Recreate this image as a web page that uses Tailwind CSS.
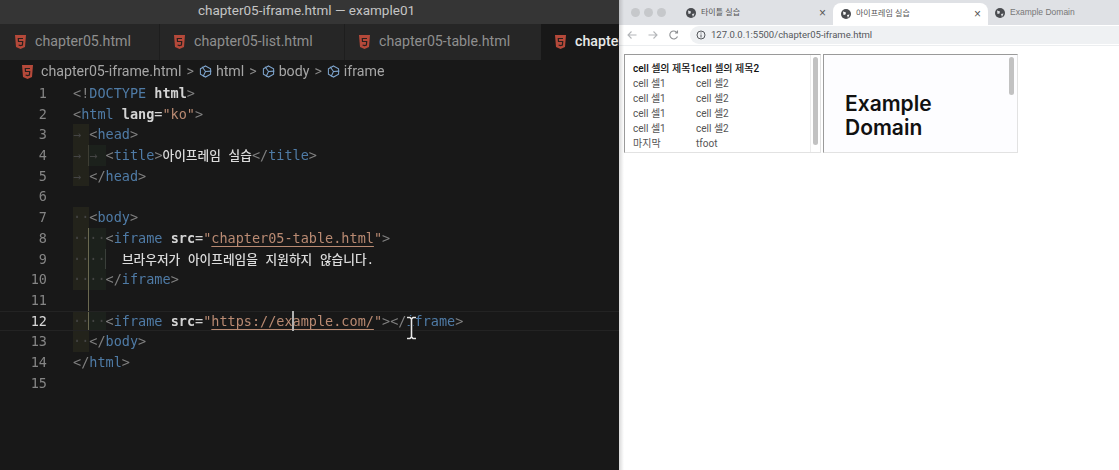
<!DOCTYPE html>
<html lang="ko">
  <head>
    <meta charset="UTF-8" />
    <title>chapter05-iframe.html</title>
    <script src="https://cdn.jsdelivr.net/npm/@tailwindcss/browser@4"></script>
  </head>
  <body class="w-[1119px] h-[470px] overflow-hidden bg-[#181818] flex font-['Liberation_Sans','Noto_Sans_CJK_KR',sans-serif] blur-[0.45px]">
    <!-- editor -->
    <section class="relative w-[619px] shrink-0 h-full flex flex-col overflow-hidden">
      <header class="h-[24px] shrink-0 bg-[#353535] flex items-center justify-center pb-[3px] pr-[6px] text-[13.5px] text-[#c4c4c4] font-['Roboto',sans-serif]">chapter05-iframe.html — example01</header>

      <nav class="h-[36px] shrink-0 bg-[#262626] flex text-[14.2px] font-['Roboto',sans-serif] text-[#8f8f8f]">
        <div class="w-[160px] shrink-0 flex items-center pl-[15px] gap-[9px] border-r border-[#1e1e1e]">
          <svg class="w-[11px] h-[14px] shrink-0" viewBox="0 0 11 14"><path fill="#b5493a" d="M0 0h11l-1 12-4.500 2L1 12z"/><path fill="none" stroke="#26201e" stroke-width="1.200" d="M8 3.500H3.300l.2 3h4.200l-.3 3.500-1.900.6-1.900-.6"/></svg>
          <span>chapter05.html</span>
        </div>
        <div class="w-[185px] shrink-0 flex items-center pl-[14px] gap-[9px] border-r border-[#1e1e1e]">
          <svg class="w-[11px] h-[14px] shrink-0" viewBox="0 0 11 14"><path fill="#b5493a" d="M0 0h11l-1 12-4.500 2L1 12z"/><path fill="none" stroke="#26201e" stroke-width="1.200" d="M8 3.500H3.300l.2 3h4.200l-.3 3.500-1.900.6-1.900-.6"/></svg>
          <span>chapter05-list.html</span>
        </div>
        <div class="w-[196px] shrink-0 flex items-center pl-[14px] gap-[9px]">
          <svg class="w-[11px] h-[14px] shrink-0" viewBox="0 0 11 14"><path fill="#b5493a" d="M0 0h11l-1 12-4.500 2L1 12z"/><path fill="none" stroke="#26201e" stroke-width="1.200" d="M8 3.500H3.300l.2 3h4.200l-.3 3.500-1.900.6-1.900-.6"/></svg>
          <span>chapter05-table.html</span>
        </div>
        <div class="flex-1 bg-[#181818] flex items-center pl-[14px] gap-[9px] text-[#e8e8e8] font-medium overflow-hidden whitespace-nowrap">
          <svg class="w-[11px] h-[14px] shrink-0" viewBox="0 0 11 14"><path fill="#b5493a" d="M0 0h11l-1 12-4.500 2L1 12z"/><path fill="none" stroke="#26201e" stroke-width="1.200" d="M8 3.500H3.300l.2 3h4.200l-.3 3.500-1.900.6-1.900-.6"/></svg>
          <span>chapter05-iframe.html</span>
        </div>
      </nav>

      <div class="h-[23px] shrink-0 flex items-center pl-[22px] text-[14.2px] text-[#a6a6a6] font-['Roboto',sans-serif]">
        <svg class="w-[11px] h-[14px] shrink-0 mr-[8px]" viewBox="0 0 11 14"><path fill="#b5493a" d="M0 0h11l-1 12-4.500 2L1 12z"/><path fill="none" stroke="#26201e" stroke-width="1.200" d="M8 3.500H3.300l.2 3h4.200l-.3 3.500-1.900.6-1.900-.6"/></svg>
        <span>chapter05-iframe.html</span>
        <span class="mx-[5px] text-[#8a8a8a]">&gt;</span>
        <svg class="w-[13px] h-[13px] mr-[4px]" viewBox="0 0 14 14" fill="none" stroke="#7fa6cf" stroke-width="1.100"><path d="M7 1l5.500 3v6L7 13l-5.500-3V4z"/><path d="M1.500 4L7 7l5.500-3M7 7v6" transform="rotate(25 7 7)"/></svg>
        <span>html</span>
        <span class="mx-[5px] text-[#8a8a8a]">&gt;</span>
        <svg class="w-[13px] h-[13px] mr-[4px]" viewBox="0 0 14 14" fill="none" stroke="#7fa6cf" stroke-width="1.100"><path d="M7 1l5.500 3v6L7 13l-5.500-3V4z"/><path d="M1.500 4L7 7l5.500-3M7 7v6" transform="rotate(25 7 7)"/></svg>
        <span>body</span>
        <span class="mx-[5px] text-[#8a8a8a]">&gt;</span>
        <svg class="w-[13px] h-[13px] mr-[4px]" viewBox="0 0 14 14" fill="none" stroke="#7fa6cf" stroke-width="1.100"><path d="M7 1l5.500 3v6L7 13l-5.500-3V4z"/><path d="M1.500 4L7 7l5.500-3M7 7v6" transform="rotate(25 7 7)"/></svg>
        <span>iframe</span>
      </div>

      <!-- code -->
      <div class="flex-1 text-[13.5px] leading-[20.7px] font-['DejaVu_Sans_Mono','Noto_Sans_CJK_KR',monospace] text-[#d4d4d4]">
        <div class="h-[20.7px] whitespace-pre"><span class="inline-block w-[47px] text-right mr-[26px] text-[#858585]">1</span><span class="text-[#808080]">&lt;!</span><span class="text-[#4f7ba6]">DOCTYPE</span> <span class="font-bold">html</span><span class="text-[#808080]">&gt;</span></div>
        <div class="h-[20.7px] whitespace-pre"><span class="inline-block w-[47px] text-right mr-[26px] text-[#858585]">2</span><span class="text-[#808080]">&lt;</span><span class="text-[#4f7ba6]">html</span> <span class="font-bold">lang</span>=<span class="text-[#b98a72]">"ko"</span><span class="text-[#808080]">&gt;</span></div>
        <div class="h-[20.7px] whitespace-pre"><span class="inline-block w-[47px] text-right mr-[26px] text-[#858585]">3</span><span class="inline-block align-top h-full w-[16.3px] bg-[#23231b] text-[#444]">→</span><span class="text-[#808080]">&lt;</span><span class="text-[#4f7ba6]">head</span><span class="text-[#808080]">&gt;</span></div>
        <div class="h-[20.7px] whitespace-pre"><span class="inline-block w-[47px] text-right mr-[26px] text-[#858585]">4</span><span class="inline-block align-top h-full w-[16.3px] bg-[#23231b] text-[#444] border-r border-[#3d3d33]">→</span><span class="inline-block align-top h-full w-[16.3px] bg-[#1c211c] text-[#444]">→</span><span class="text-[#808080]">&lt;</span><span class="text-[#4f7ba6]">title</span><span class="text-[#808080]">&gt;</span><span class="text-[12.7px] font-medium text-[#dcdcdc]">아이프레임 실습</span><span class="text-[#808080]">&lt;/</span><span class="text-[#4f7ba6]">title</span><span class="text-[#808080]">&gt;</span></div>
        <div class="h-[20.7px] whitespace-pre"><span class="inline-block w-[47px] text-right mr-[26px] text-[#858585]">5</span><span class="inline-block align-top h-full w-[16.3px] bg-[#23231b] text-[#444]">→</span><span class="text-[#808080]">&lt;/</span><span class="text-[#4f7ba6]">head</span><span class="text-[#808080]">&gt;</span></div>
        <div class="h-[20.7px] whitespace-pre"><span class="inline-block w-[47px] text-right mr-[26px] text-[#858585]">6</span></div>
        <div class="h-[20.7px] whitespace-pre"><span class="inline-block w-[47px] text-right mr-[26px] text-[#858585]">7</span><span class="inline-block align-top h-full w-[16.3px] bg-[#23231b] text-[#444]">··</span><span class="text-[#808080]">&lt;</span><span class="text-[#4f7ba6]">body</span><span class="text-[#808080]">&gt;</span></div>
        <div class="h-[20.7px] whitespace-pre"><span class="inline-block w-[47px] text-right mr-[26px] text-[#858585]">8</span><span class="inline-block align-top h-full w-[16.3px] bg-[#23231b] text-[#444] border-r border-[#6a6850]">··</span><span class="inline-block align-top h-full w-[16.3px] bg-[#1c211c] text-[#444]">··</span><span class="text-[#808080]">&lt;</span><span class="text-[#4f7ba6]">iframe</span> <span class="font-bold">src</span>=<span class="text-[#b98a72]">"</span><span class="text-[#b98a72] underline decoration-[#b98a72] underline-offset-[3px]">chapter05-table.html</span><span class="text-[#b98a72]">"</span><span class="text-[#808080]">&gt;</span></div>
        <div class="h-[20.7px] whitespace-pre"><span class="inline-block w-[47px] text-right mr-[26px] text-[#858585]">9</span><span class="inline-block align-top h-full w-[16.3px] bg-[#23231b] text-[#444] border-r border-[#6a6850]">··</span><span class="inline-block align-top h-full w-[16.3px] bg-[#1c211c] text-[#444] border-r border-[#3a3f3a]">··</span><span class="inline-block w-[16.3px]"></span><span class="text-[12.7px] font-medium text-[#dcdcdc]">브라우저가 아이프레임을 지원하지 않습니다.</span></div>
        <div class="h-[20.7px] whitespace-pre"><span class="inline-block w-[47px] text-right mr-[26px] text-[#858585]">10</span><span class="inline-block align-top h-full w-[16.3px] bg-[#23231b] text-[#444] border-r border-[#6a6850]">··</span><span class="inline-block align-top h-full w-[16.3px] bg-[#1c211c] text-[#444]">··</span><span class="text-[#808080]">&lt;/</span><span class="text-[#4f7ba6]">iframe</span><span class="text-[#808080]">&gt;</span></div>
        <div class="h-[20.7px] whitespace-pre"><span class="inline-block w-[47px] text-right mr-[26px] text-[#858585]">11</span><span class="inline-block align-top h-full w-[16.3px] border-r border-[#6a6850]"></span></div>
        <div class="h-[20.7px] leading-[18.7px] whitespace-pre border-y border-[#232323]"><span class="inline-block w-[47px] text-right mr-[26px] text-[#d8d8d8]">12</span><span class="inline-block align-top h-full w-[16.3px] bg-[#23231b] text-[#444] border-r border-[#6a6850]">··</span><span class="inline-block align-top h-full w-[16.3px] bg-[#1c211c] text-[#444]">··</span><span class="text-[#808080]">&lt;</span><span class="text-[#4f7ba6]">iframe</span> <span class="font-bold">src</span>=<span class="text-[#b98a72]">"</span><span class="text-[#b98a72] underline decoration-[#b98a72] underline-offset-[3px]">https://example.com/</span><span class="text-[#b98a72]">"</span><span class="text-[#808080]">&gt;&lt;/</span><span class="text-[#4f7ba6]">iframe</span><span class="text-[#808080]">&gt;</span></div>
        <div class="h-[20.7px] whitespace-pre"><span class="inline-block w-[47px] text-right mr-[26px] text-[#858585]">13</span><span class="inline-block align-top h-full w-[16.3px] bg-[#23231b] text-[#444]">··</span><span class="text-[#808080]">&lt;/</span><span class="text-[#4f7ba6]">body</span><span class="text-[#808080]">&gt;</span></div>
        <div class="h-[20.7px] whitespace-pre"><span class="inline-block w-[47px] text-right mr-[26px] text-[#858585]">14</span><span class="text-[#808080]">&lt;/</span><span class="text-[#4f7ba6]">html</span><span class="text-[#808080]">&gt;</span></div>
        <div class="h-[20.7px] whitespace-pre"><span class="inline-block w-[47px] text-right mr-[26px] text-[#858585]">15</span></div>
      </div>

      <!-- text cursor and mouse pointer -->
      <div class="absolute left-[292px] top-[311px] w-[2px] h-[20px] bg-[#b0b0b0]"></div>
      <svg class="absolute left-[405px] top-[316px] w-[13px] h-[24px]" viewBox="0 0 13 24" fill="none"><path d="M2 1.500h3l1.500 1.500L8 1.500h3M6.500 3v18M2 22.500h3l1.500-1.500L8 22.500h3" stroke="#111" stroke-width="3.500"/><path d="M2 1.500h3l1.500 1.500L8 1.500h3M6.500 3v18M2 22.500h3l1.500-1.500L8 22.500h3" stroke="#e8e8e8" stroke-width="1.600"/></svg>
    </section>

    <!-- browser -->
    <section class="flex-1 h-full bg-white flex flex-col relative overflow-hidden text-[#555]">
      <div class="h-[25px] shrink-0 bg-[#dfe1e5] flex items-end text-[8px]">
        <div class="w-[214px] h-full shrink-0 flex items-center pl-[12px]">
          <span class="w-[9px] h-[9px] rounded-full bg-[#c6c8cb] mr-[4px]"></span>
          <span class="w-[9px] h-[9px] rounded-full bg-[#c6c8cb] mr-[4px]"></span>
          <span class="w-[9px] h-[9px] rounded-full bg-[#c6c8cb] mr-[20px]"></span>
          <svg class="w-[10px] h-[10px] mr-[5px]" viewBox="0 0 10 10"><circle cx="5" cy="5" r="5" fill="#4a4c50"/><path d="M2 2.500l3 1-.5 2-2 .5zM6 6l2.500-.5L7 9z" fill="#dfe1e5"/></svg>
          <span>타이틀 실습</span>
          <span class="ml-auto mr-[7px] text-[12px] leading-none text-[#555]">×</span>
        </div>
        <div class="w-[155px] h-[22px] shrink-0 bg-white rounded-t-lg flex items-center pl-[8px]">
          <svg class="w-[10px] h-[10px] mr-[5px]" viewBox="0 0 10 10"><circle cx="5" cy="5" r="5" fill="#4a4c50"/><path d="M2 2.500l3 1-.5 2-2 .5zM6 6l2.500-.5L7 9z" fill="#fff"/></svg>
          <span>아이프레임 실습</span>
          <span class="ml-auto mr-[7px] text-[12px] leading-none text-[#555]">×</span>
        </div>
        <div class="flex-1 h-full flex items-center pl-[7px]">
          <svg class="w-[10px] h-[10px] mr-[5px]" viewBox="0 0 10 10"><circle cx="5" cy="5" r="5" fill="#4a4c50"/><path d="M2 2.500l3 1-.5 2-2 .5zM6 6l2.500-.5L7 9z" fill="#dfe1e5"/></svg>
          <span class="text-[#777] text-[8.500px]">Example Domain</span>
        </div>
      </div>
      <div class="h-[21px] shrink-0 flex items-center pl-[8px] border-b border-[#eceef0]">
        <svg class="w-[10px] h-[10px] mr-[11px]" viewBox="0 0 10 10" fill="none" stroke="#b4b6b9" stroke-width="1.100"><path d="M9.500 5H1M4.500 1.500L1 5l3.500 3.500"/></svg>
        <svg class="w-[10px] h-[10px] mr-[11px]" viewBox="0 0 10 10" fill="none" stroke="#b4b6b9" stroke-width="1.100"><path d="M.5 5H9M5.500 1.500L9 5 5.500 8.500"/></svg>
        <svg class="w-[10px] h-[10px] mr-[11px]" viewBox="0 0 10 10" fill="none" stroke="#8d8f92" stroke-width="1.100"><path d="M8.500 6.500A4 4 0 1 1 8 2.500M8.500 .5v2.500H6"/></svg>
        <div class="flex-1 h-[18px] bg-[#eff1f3] rounded-l-full flex items-center pl-[6px] text-[9.500px] text-[#55585c] font-['Roboto',sans-serif]">
          <svg class="w-[10px] h-[10px] mr-[5px]" viewBox="0 0 10 10" fill="none" stroke="#55585c" stroke-width="1"><circle cx="5" cy="5" r="4"/><path d="M5 4.500v3M5 2.500v1"/></svg>
          <span>127.0.0.1:5500/chapter05-iframe.html</span>
        </div>
      </div>

      <div class="flex gap-[2px] pl-[5px] pt-[8px]">
        <div class="relative w-[197px] h-[99px] border border-t-[#9a9a9a] border-l-[#9a9a9a] border-r-[#e2e2e2] border-b-[#e2e2e2] overflow-hidden pl-[8px] pt-[6px] text-[10px] leading-[15px] text-[#555] font-['Roboto','Noto_Sans_CJK_KR',sans-serif]">
          <div class="grid grid-cols-[63px_auto] justify-start whitespace-nowrap">
            <span class="text-[#111] font-medium">cell 셀의 제목1</span><span class="text-[#111] font-medium">cell 셀의 제목2</span>
            <span>cell 셀1</span><span>cell 셀2</span>
            <span>cell 셀1</span><span>cell 셀2</span>
            <span>cell 셀1</span><span>cell 셀2</span>
            <span>cell 셀1</span><span>cell 셀2</span>
            <span>마지막</span><span>tfoot</span>
          </div>
          <div class="absolute right-[1px] top-0 bottom-0 w-[9px] border-l border-[#ececec]">
            <div class="mx-auto mt-[2px] w-[5px] h-[88px] rounded-full bg-[#c2c2c2]"></div>
          </div>
        </div>
        <div class="relative w-[195px] h-[99px] border border-t-[#9a9a9a] border-l-[#9a9a9a] border-r-[#e2e2e2] border-b-[#e2e2e2] overflow-hidden bg-[#fdfdff] pl-[21px] pt-[37px]">
          <h1 class="text-[21px] leading-[23.500px] font-semibold text-[#111] font-['Inter',sans-serif] w-[130px]">Example Domain</h1>
          <div class="absolute right-[1px] top-0 bottom-0 w-[9px]">
            <div class="mx-auto mt-[2px] w-[5px] h-[38px] rounded-full bg-[#c2c2c2]"></div>
          </div>
        </div>
      </div>
      <div class="absolute left-0 top-0 bottom-0 w-[5px] bg-gradient-to-r from-black/15 to-transparent"></div>
    </section>
  </body>
</html>
